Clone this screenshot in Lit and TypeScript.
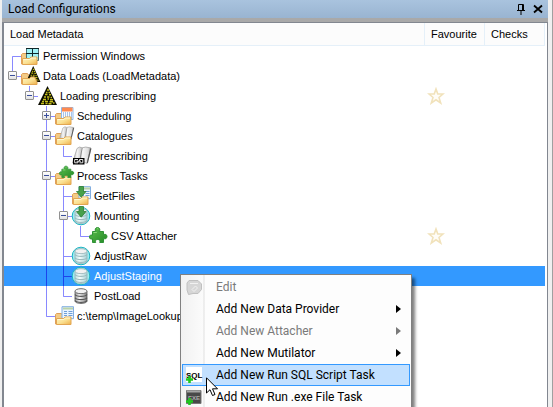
import { LitElement, html, svg, css, nothing, type TemplateResult, type SVGTemplateResult } from "lit";
import { customElement } from "lit/decorators.js";
import { classMap } from "lit/directives/class-map.js";

/* ---- icon parts, drawn on an 18 x 20 tile ---- */

const folderBack = svg`
  <path d="M.5 18V8.500L1.500 7.500h5l1 1.500H15.500V18Z" fill="#f3cb85" stroke="#e0a05a"/>`;
const folderFront = svg`
  <path d="M1.500 12.500h7l1.500-1.500h6v7.500h-14.500Z" fill="url(#folder)" stroke="#e2a653"/>
  <path d="M2.500 13.500h6.500l1.500-1.500h4.500" fill="none" stroke="#fff8d2"/>`;

const defs = svg`
  <defs>
    <linearGradient id="folder" x1="0" y1="0" x2="1" y2="1">
      <stop offset="0" stop-color="#fff6c4"/><stop offset=".55" stop-color="#fadf90"/><stop offset="1" stop-color="#eeb04a"/>
    </linearGradient>
    <linearGradient id="metal" x1="0" y1="0" x2="1" y2="0">
      <stop offset="0" stop-color="#9c9c9c"/><stop offset=".4" stop-color="#f4f4f4"/><stop offset="1" stop-color="#777"/>
    </linearGradient>
    <linearGradient id="glass" x1="0" y1="0" x2="1" y2="0">
      <stop offset="0" stop-color="#b9dfe2"/><stop offset=".4" stop-color="#f4fdfd"/><stop offset="1" stop-color="#a5d0d5"/>
    </linearGradient>
    <linearGradient id="leaf" x1="0" y1="0" x2="1" y2="1">
      <stop offset="0" stop-color="#5dc04f"/><stop offset="1" stop-color="#258a26"/>
    </linearGradient>
    <linearGradient id="page" x1="0" y1="0" x2="1" y2="0">
      <stop offset="0" stop-color="#a8a8a8"/><stop offset=".25" stop-color="#f6f6f6"/><stop offset=".45" stop-color="#cfcfcf"/>
      <stop offset=".55" stop-color="#f8f8f8"/><stop offset=".85" stop-color="#dcdcdc"/><stop offset="1" stop-color="#8b8b8b"/>
    </linearGradient>
  </defs>`;

const hazard = svg`
  <path d="M9.500 0L19 19H0Z" fill="#0c0c00"/>
  <path d="M9 4h2M8 6.500h1.500M10.500 6.500h1.500M7 8.500h2.500M11 8.800h2M6 11h2M9 11h2.500M12.500 11.500h1.500M5 13.500h3M9.500 13h1.500M12 13.700h3M4 15.500h2M7 15.500h3M11.500 15.800h3.500M3 17.500h3M7.500 17.500h2M10.500 17.800h3M15 17h1.500"
    stroke="#c4be1c" stroke-width="1.400" fill="none"/>`;

const puzzle = svg`
  <path d="M3.500 5.500h3.200C5.600 3.800 6.300 1.500 8.500 1.500s3 2.300 1.800 4h4.200v3.300c1.700-1 3.500-.3 3.500 1.700s-1.800 2.900-3.500 1.900v4.100H10.700c.9-2-.3-3-2-3s-3 1-2 3H3.500v-3.800C1.800 13.700.5 12.800.5 11s1.300-2.500 3-1.700Z"
    fill="url(#leaf)" stroke="#2f9236"/>
  <path d="M4.500 6.500h3.300M8 3q.8-1 1.400 0" stroke="#8ddb7c" fill="none"/>`;

const book = svg`
  <path d="M5 2.500Q7.500 0 10 1.800Q13 .2 19 2L15 17.500Q11 14.500 8 16.500Q5 15 .5 17Z" fill="url(#page)" stroke="#a5a5a5" stroke-width=".8"/>
  <path d="M10.200 2L7.500 16" stroke="#8d8d8d" fill="none"/>
  <path d="M18.800 2.500L15.300 17" stroke="#555" stroke-width="1.200" fill="none"/>`;

const cylinder = (fill: string, line: string, edge: string) => svg`
  <path d="M3 5.500V15c0 1.400 2.700 2.500 6 2.500s6-1.100 6-2.500V5.500Z" fill=${fill} stroke=${edge} stroke-width=".8"/>
  <path d="M3 8.500c1.500 2.500 10.500 2.500 12 0M3 11.700c1.500 2.500 10.500 2.500 12 0M3 14.500c1.500 2.500 10.500 2.500 12 0" fill="none" stroke=${line} stroke-width="1.200"/>
  <ellipse cx="9" cy="5.200" rx="6" ry="2.500" fill="#f1f1f1" stroke=${edge} stroke-width=".9"/>`;

const ringed = svg`
  <circle cx="9" cy="10" r="8.800" fill="#9decf2" stroke="#1db4c2" stroke-width="1"/>
  ${cylinder("url(#glass)", "#9dbabd", "#9ab6ba")}`;

const greenArrow = svg`
  <path d="M7 .5h4.500v5H14L9.200 11.200 4.500 5.500H7Z" fill="#47a04b" stroke="#2c7f35" stroke-width=".8"/>`;

const listPage = svg`
  <path d="M7 .7h11.500v12H7Z" fill="#e9f3ff" stroke="#82aee0"/>
  <path d="M8 2.500h10" stroke="#b9d3a9" stroke-width="2"/>
  <path d="M9 5.500h3M13.500 5.500h4M9 7.500h3M13.500 7.500h4M9 9.500h3M13.500 9.500h4" stroke="#6f9fd8"/>`;

const icons: Record<string, SVGTemplateResult> = {
  windows: svg`${folderBack}
    <path d="M5.500 2.500h12v12h-12Z" fill="#9ff3f6" stroke="#4b6f73"/>
    <path d="M5 2.500h13M11.500 2v11M5 7.500h13" stroke="#10282b" fill="none"/>${folderFront}`,
  loads: svg`${folderBack}<g transform="translate(5 0) scale(.76 .84)">${hazard}</g>
    <path d="M1.500 12.500h7l1.500-1.500h3.500l2.500 5v2.500h-14.500Z" fill="url(#folder)" stroke="#e2a653"/>`,
  hazard,
  schedule: svg`${folderBack}
    <path d="M6.500 1.500h11.500v12h-11.500Z" fill="#f7fbff" stroke="#8eb9ea"/>
    <path d="M7 3.500h10.500" stroke="#ff8a50" stroke-width="4"/>
    <path d="M8.500 6v7M10.500 6v7M12.500 6v7M14.500 6v7M16.500 6v7" stroke="#a8c4ea"/>${folderFront}`,
  catalogues: svg`${folderBack}<g transform="translate(4 0) scale(.78)">${book}</g>${folderFront}`,
  catalogue: svg`${book}
    <path d="M1 12h11.500v6.500H1Z" fill="#000"/>
    <path d="M6 13.500H2.700v3.300H6v-1.500M7.500 15v-1.500h3.300v3.300H7.500M4.500 15.200h4.500" stroke="#fff" fill="none" stroke-width=".9"/>`,
  process: svg`${folderBack}${folderFront}<g transform="translate(4 -1) scale(.82 .76)">${puzzle}</g>`,
  files: svg`${folderBack}${listPage}${folderFront}${greenArrow}`,
  mounting: svg`${ringed}${greenArrow}`,
  puzzle,
  ringed,
  database: cylinder("url(#metal)", "#555", "#5c5c5c"),
  lookup: svg`${folderBack}${listPage}${folderFront}`,
  edit: svg`
    <path d="M4 3.500h9l3.500 3.500v5.500L13 16.500H8l-4.500 1L2 13V6Z" fill="#d6d6d6" stroke="#c0c0c0"/>
    <path d="M5 6.500h8M7 12.500l3.500-3.500 2 2-3.500 3.500Z" stroke="#f1f1f1" fill="none"/>`,
  sql: svg`
    <path d="M1 2h16v15H1Z" fill="#fff"/>
    <text x="1" y="13" font-family="Liberation Sans, sans-serif" font-size="8" font-weight="700">SQL</text>
    <path d="M4.500 11v7M1 14.500h7" stroke="#20c81e" stroke-width="2.600"/>`,
  exe: svg`
    <path d="M1.500 3.500h14.500v13H1.500Z" fill="#484848" stroke="#777"/>
    <path d="M2 4.500h13.500" stroke="#a5a5a5" stroke-width="2"/>
    <text x="3" y="13" font-family="Liberation Sans, sans-serif" font-size="6" font-weight="700" fill="#aaa">EXE</text>
    <path d="M4.500 11v7M1 14.500h7" stroke="#20c81e" stroke-width="2.600"/>`,
};

const icon = (name: string) => html`
  <svg class="icon" viewBox="0 0 18 20" aria-hidden="true">${defs}${icons[name]}</svg>`;

/* ---- data ---- */

interface Row {
  label: string;
  icon: string;
  /* one letter per level: "." blank, "|" through, "T" branch, "L" last branch, "r" first branch */
  guides: string;
  toggle?: "+" | "-";
  star?: boolean;
  selected?: boolean;
}

const rows: Row[] = [
  { label: "Permission Windows", icon: "windows", guides: "r" },
  { label: "Data Loads (LoadMetadata)", icon: "loads", guides: "L", toggle: "-" },
  { label: "Loading prescribing", icon: "hazard", guides: ".L", toggle: "-", star: true },
  { label: "Scheduling", icon: "schedule", guides: "..T", toggle: "+" },
  { label: "Catalogues", icon: "catalogues", guides: "..T", toggle: "-" },
  { label: "prescribing", icon: "catalogue", guides: "..|L" },
  { label: "Process Tasks", icon: "process", guides: "..T", toggle: "-" },
  { label: "GetFiles", icon: "files", guides: "..|T" },
  { label: "Mounting", icon: "mounting", guides: "..|T", toggle: "-" },
  { label: "CSV Attacher", icon: "puzzle", guides: "..||L", star: true },
  { label: "AdjustRaw", icon: "ringed", guides: "..|T" },
  { label: "AdjustStaging", icon: "ringed", guides: "..|T", selected: true },
  { label: "PostLoad", icon: "database", guides: "..|L" },
  { label: "c:\\temp\\ImageLookup", icon: "lookup", guides: "..L" },
];

interface Item { label: string; icon?: string; sub?: boolean; disabled?: boolean; active?: boolean }

const items: Item[] = [
  { label: "Edit", icon: "edit", disabled: true },
  { label: "Add New Data Provider", sub: true },
  { label: "Add New Attacher", sub: true, disabled: true },
  { label: "Add New Mutilator", sub: true },
  { label: "Add New Run SQL Script Task", icon: "sql", active: true },
  { label: "Add New Run .exe File Task", icon: "exe" },
];

const guidePath: Record<string, string> = {
  "|": "M8.500 0V20",
  T: "M8.500 0V20M9 10.500H17",
  L: "M8.500 0V10.500H17",
  r: "M8.500 20V10.500H17",
};

@customElement("tree-panel")
export class TreePanel extends LitElement {
  static styles = css`
    :host { display: block; }
    table { width: 100%; border-collapse: collapse; table-layout: fixed; }
    .narrow { width: 60px; }
    th {
      box-sizing: border-box; height: 22px; padding: 0 6px; text-align: left; font-weight: 400;
      background: #fcfcfc; border-bottom: 1px solid #e5f0f9;
    }
    th + th { border-left: 1px solid #e5f0f9; }
    th:last-child { border-right: 1px solid #e5f0f9; }
    td { height: 20px; padding: 0; }
    .cell { display: flex; align-items: center; height: 20px; }
    .guide { display: grid; width: 17px; height: 20px; flex: none; }
    .line, .toggle { grid-area: 1 / 1; }
    .line { width: 17px; height: 20px; fill: none; stroke: rgba(40, 40, 255, .55); }
    .toggle {
      place-self: center; width: 9px; height: 9px; padding: 0; display: grid;
      border: 1px solid #919191; border-radius: 1px; background: linear-gradient(#fff, #e2e2e2);
    }
    .toggle svg { width: 7px; height: 7px; stroke: #3b4f9c; fill: none; }
    .icon { width: 18px; height: 20px; flex: none; overflow: visible; }
    .label { margin-left: 4px; white-space: pre; }
    .star { display: block; border: 0; padding: 0; margin: 0 2px; background: none; width: 18px; height: 18px; }
    .star svg { display: block; width: 18px; height: 18px; fill: #fffdf8; stroke: #f1e2bb; stroke-width: 1.600; }
    .selected { background: #3399ff; color: #fff; }
    .selected .line { stroke: rgba(20, 40, 230, .75); }
  `;

  private guide(kind: string, toggle?: string): TemplateResult {
    return html`<span class="guide">
      <svg class="line" viewBox="0 0 17 20" aria-hidden="true"><path d=${guidePath[kind] ?? ""}></path></svg>
      ${toggle
        ? html`<button class="toggle" aria-label=${toggle === "+" ? "Expand" : "Collapse"}>
            <svg viewBox="0 0 7 7"><path d=${toggle === "+" ? "M1 3.500H6M3.500 1V6" : "M1 3.500H6"}></path></svg>
          </button>`
        : nothing}
    </span>`;
  }

  render() {
    return html`<table>
      <colgroup><col /><col class="narrow" /><col class="narrow" /></colgroup>
      <thead><tr><th>Load Metadata</th><th>Favourite</th><th>Checks</th></tr></thead>
      <tbody>
        ${rows.map((row) => html`<tr class=${classMap({ selected: !!row.selected })}>
          <td><div class="cell">
            ${[...row.guides].map((kind, i) => this.guide(kind, i === row.guides.length - 1 ? row.toggle : undefined))}
            ${icon(row.icon)}<span class="label">${row.label}</span>
          </div></td>
          <td>${row.star
            ? html`<button class="star" aria-label="Favourite">
                <svg viewBox="0 0 18 18"><path d="M9 2L10.800 7H16L12 10.500 13.700 16 9 12.800 4.300 16 6 10.500 2 7H7.200Z"></path></svg>
              </button>`
            : nothing}</td>
          <td></td>
        </tr>`)}
      </tbody>
    </table>`;
  }
}

@customElement("context-menu")
export class ContextMenu extends LitElement {
  static styles = css`
    :host {
      display: block; box-sizing: border-box; padding: 1px; border: 1px solid #808080;
      background: linear-gradient(90deg, #f1f1f1, #fbfbfb 22px, #e0e0e0 23px, #fdfdfd 24px);
      box-shadow: 3px 4px 3px rgba(0, 0, 0, .5);
      font: 12px/20px Roboto, "Open Sans", sans-serif;
    }
    .item {
      position: relative; display: flex; align-items: center; box-sizing: border-box;
      width: 100%; height: 22px; padding: 0 8px 0 2px; border: 1px solid transparent;
      background: none; font: inherit; color: #000; text-align: left;
    }
    .item:disabled { color: #7a7a7a; }
    .active { background: #c2e0ff; border-color: #3399ff; }
    .slot { width: 18px; height: 20px; flex: none; }
    .icon { display: block; width: 18px; height: 20px; }
    .text { flex: 1; margin-left: 13px; white-space: nowrap; }
    .arrow { width: 5px; height: 8px; fill: currentColor; }
    .pointer { position: absolute; left: 23px; top: 12px; width: 13px; height: 20px; z-index: 1; }
  `;

  render() {
    return items.map((item) => html`
      <button class=${classMap({ item: true, active: !!item.active })} ?disabled=${item.disabled}>
        <span class="slot">${item.icon ? icon(item.icon) : nothing}</span>
        <span class="text">${item.label}</span>
        ${item.sub ? html`<svg class="arrow" viewBox="0 0 5 8"><path d="M0 0L5 4 0 8Z"></path></svg>` : nothing}
        ${item.active
          ? html`<svg class="pointer" viewBox="0 0 13 20">
              <path d="M.5 .800V16L4 12.700 6.500 18.500 9 17.500 6.500 11.800H11.500Z" fill="#fff" stroke="#000"></path>
            </svg>`
          : nothing}
      </button>`);
  }
}

@customElement("app-root")
export class AppRoot extends LitElement {
  static styles = css`
    :host {
      position: relative; display: flex; flex-direction: column; box-sizing: border-box;
      height: 100vh; overflow: hidden; padding: 0 4px 0 2px;
      background: #f0f0f0; border-right: 1px solid #a0a0a0; color: #000;
      font: 11px/20px "Liberation Sans", Arial, sans-serif;
    }
    .title {
      display: flex; align-items: center; height: 18px; padding: 0 4px 0 6px; flex: none;
      background: linear-gradient(#a9c3de, #99b4d1); border-bottom: 4px solid #a9a9a9;
      font: 12px/18px Roboto, "Open Sans", sans-serif;
    }
    .name { flex: 1; margin: 0; font: inherit; }
    .tool { display: block; border: 0; padding: 0; margin-left: 5px; background: none; width: 12px; height: 12px; }
    .tool svg { display: block; width: 12px; height: 12px; fill: none; stroke: #000; }
    .body { flex: 1; min-height: 0; background: #fff; border: 1px solid #828790; border-width: 1px 1px 0 2px; }
    .tree { padding-right: 2px; }
    .menu { position: absolute; left: 180px; top: 274px; bottom: -2px; width: 232px; }
  `;

  render() {
    return html`
      <header class="title">
        <h1 class="name">Load Configurations</h1>
        <button class="tool" aria-label="Pin">
          <svg viewBox="0 0 12 12"><path d="M3.500 7V1.500H8.500V7M7.500 1V7M2 7.500H10M6 8V12"></path></svg>
        </button>
        <button class="tool" aria-label="Close">
          <svg viewBox="0 0 12 12" stroke-width="1.800"><path d="M2 2.500L10 9.500M10 2.500L2 9.500"></path></svg>
        </button>
      </header>
      <main class="body"><tree-panel class="tree"></tree-panel></main>
      <context-menu class="menu"></context-menu>`;
  }
}
